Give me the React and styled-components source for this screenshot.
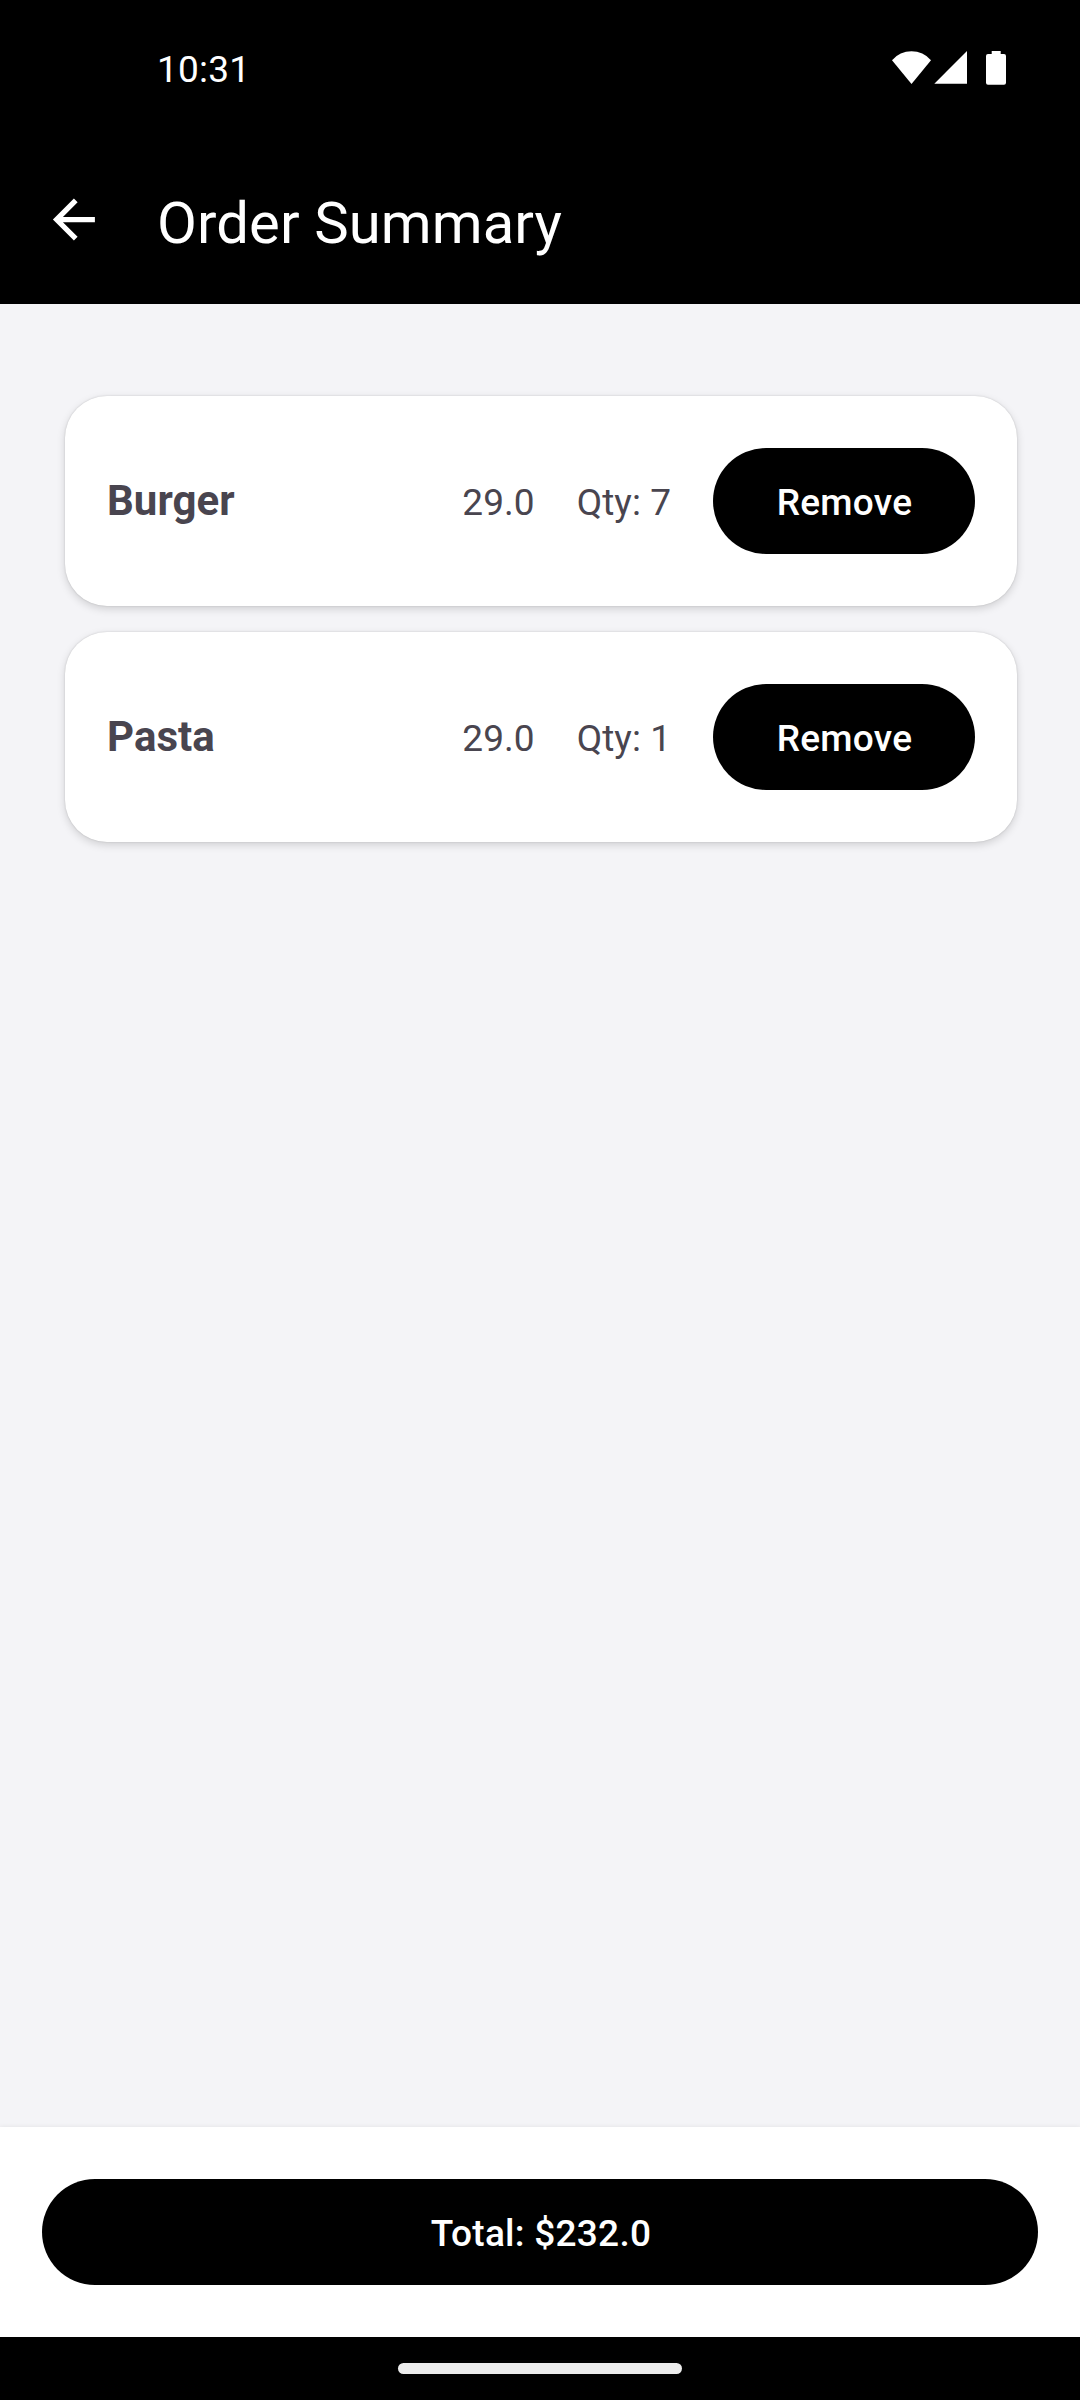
import React from 'react';
import styled, { createGlobalStyle } from 'styled-components';

const Global = createGlobalStyle`
  * { box-sizing: border-box; }
  body { margin: 0; background: #f4f4f7; font-family: Roboto, sans-serif; }
`;
const Screen = styled.div`
  width: 1080px; height: 2400px; display: flex; flex-direction: column;
  background: #f4f4f7; overflow: hidden;
`;
const StatusBar = styled.div`
  height: 136px; flex: none; background: #000; color: #fff;
  display: flex; align-items: center; justify-content: space-between;
  padding: 0 72px 0 157px;
`;
const Clock = styled.span`
  margin-top: 3px; font-size: 37px; line-height: 43px; letter-spacing: 0.2px;
`;
const StatusIcons = styled.svg`
  display: block; width: 118px; height: 40px;
`;
const AppBar = styled.header`
  height: 168px; flex: none; background: #000; color: #fff;
  display: flex; align-items: center; padding: 0 42px;
`;
const BackIcon = styled.svg`
  display: block; width: 63px; height: 63px; margin: 0 52px 1px 0;
`;
const Title = styled.h1`
  margin: 6px 0 0; font-size: 58px; line-height: 74px; font-weight: 400; letter-spacing: .1px;
`;
const Content = styled.main`
  flex: 1; display: flex; flex-direction: column; gap: 26px; padding: 92px 63px 0 65px;
`;
const Card = styled.article`
  height: 210px; border-radius: 42px; background: #fff;
  box-shadow: 0 3px 9px rgba(0,0,0,.15), 0 0 2px rgba(0,0,0,.16);
  display: flex; align-items: center; padding: 0 42px; gap: 42px;
`;
const Name = styled.span`
  flex: 1; margin-bottom: 1px; font-size: 42px; line-height: 49px; letter-spacing: .05px;
  font-weight: 700; color: #49454f;
`;
const Info = styled.span`
  margin-top: 3px; font-size: 37px; line-height: 43px; letter-spacing: .05px; color: #49454f;
`;
const Pill = styled.button`
  height: 106px; width: ${p => p.$wide ? '100%' : '262px'};
  border: 0; border-radius: 53px; background: #000; color: #fff;
  font: 500 37px/43px Roboto, sans-serif; letter-spacing: .26px;
  padding: 3px 0 0 ${p => p.$wide ? '2px' : '1px'};
`;
const Footer = styled.footer`
  height: 210px; flex: none; background: #fff; display: flex; align-items: center;
  padding: 0 42px; box-shadow: 0 0 5px rgba(0,0,0,.08);
`;
const NavBar = styled.div`
  position: relative; height: 63px; flex: none; background: #000;
  display: flex; justify-content: center; align-items: center;
`;
const Handle = styled.div`
  width: 284px; height: 11px; border-radius: 6px; background: #ececec;
`;

const items = [
  { name: 'Burger', price: '29.0', qty: 7 },
  { name: 'Pasta', price: '29.0', qty: 1 },
];

export default function App() {
  return (
    <Screen>
      <Global />
      <StatusBar>
        <Clock>10:31</Clock>
        <StatusIcons viewBox="0 0 118 40" fill="#fff">
          <path d="M2 12.2A25.6 25.6 0 0 1 41 12.2L21.5 36Z" />
          <path d="M77 3V35.7H44.3Z" />
          <path d="M101.7 3h9v3h3.3a2 2 0 0 1 2 2v26.7a2 2 0 0 1-2 2h-16a2 2 0 0 1-2-2V8a2 2 0 0 1 2-2h3.7z" />
        </StatusIcons>
      </StatusBar>
      <AppBar>
        <BackIcon viewBox="-0.15 0 24 24" fill="#fff">
          <path d="M20 11H7.83l5.59-5.59L12 4l-8 8 8 8 1.41-1.41L7.83 13H20v-2z" />
        </BackIcon>
        <Title>Order Summary</Title>
      </AppBar>
      <Content>
        {items.map((it) => (
          <Card key={it.name}>
            <Name>{it.name}</Name>
            <Info>{it.price}</Info>
            <Info>Qty: {it.qty}</Info>
            <Pill>Remove</Pill>
          </Card>
        ))}
      </Content>
      <Footer><Pill $wide>Total: $232.0</Pill></Footer>
      <NavBar><Handle /></NavBar>
    </Screen>
  );
}
